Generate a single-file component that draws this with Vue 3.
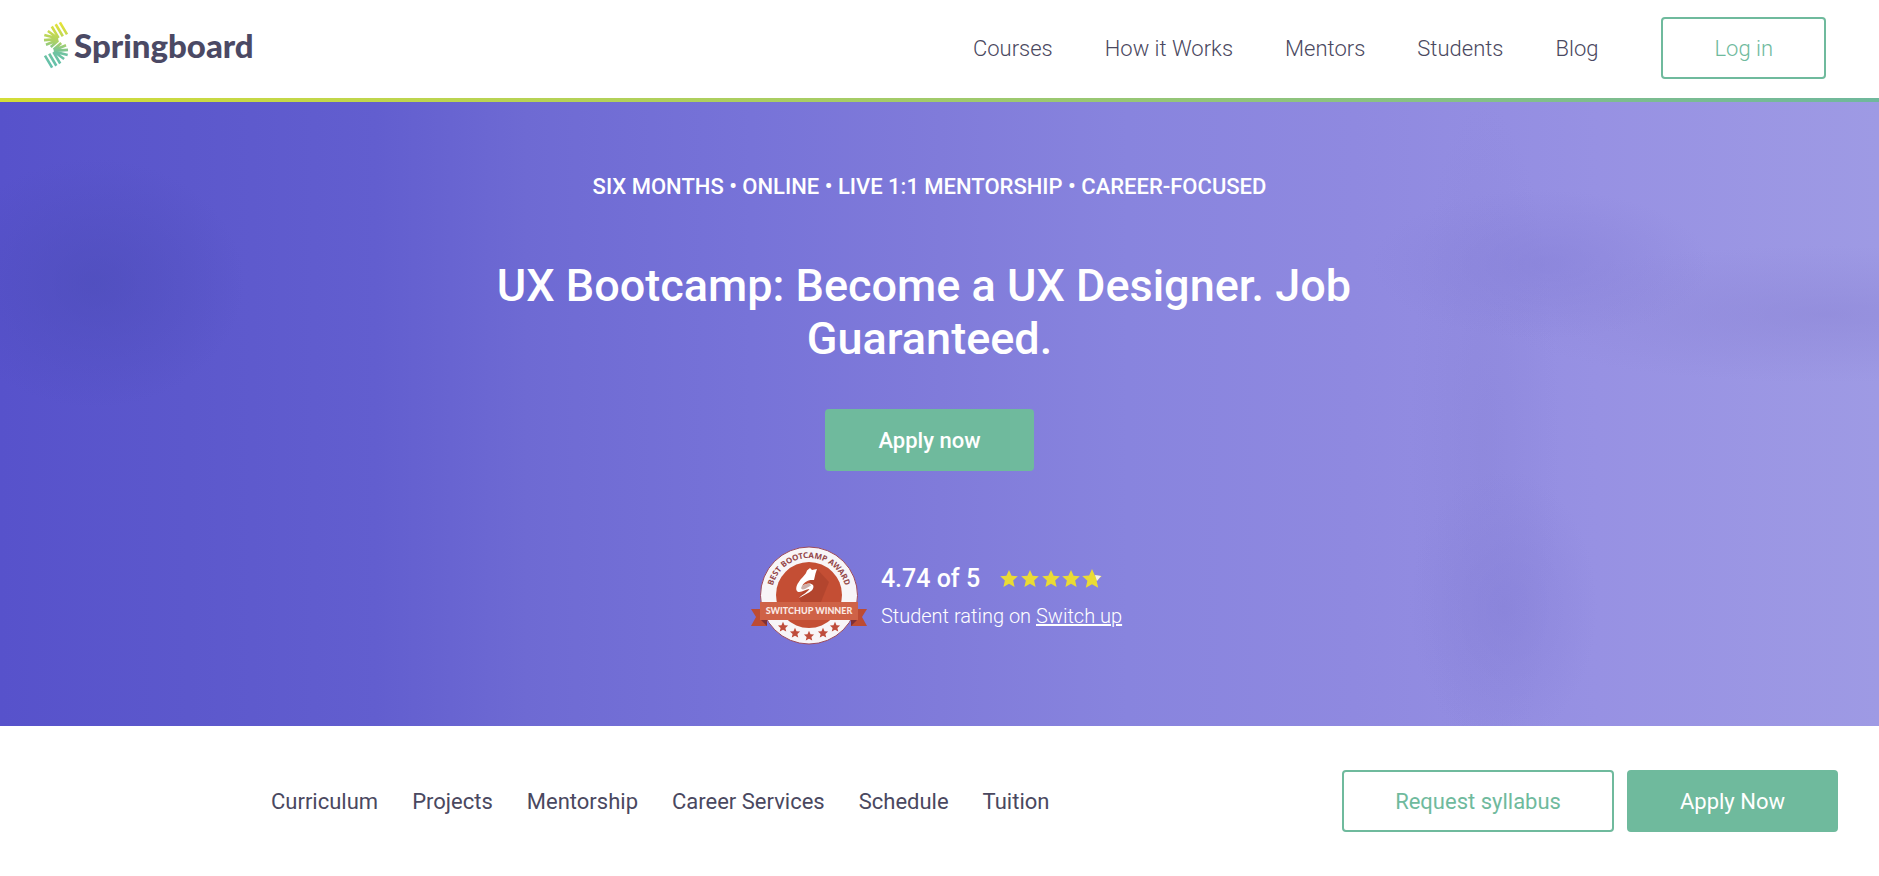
<script setup>
const mainLinks = ['Courses', 'How it Works', 'Mentors', 'Students', 'Blog']
const sectionLinks = ['Curriculum', 'Projects', 'Mentorship', 'Career Services', 'Schedule', 'Tuition']

const star = 'M0-10 2.9-3.6 9.8-3 4.6 1.8 6.2 8.8 0 5.2-6.2 8.8-4.6 1.8-9.8-3-2.9-3.6Z'
const ratingStars = [
  { x: 9, s: 0.9 },
  { x: 30, s: 0.9 },
  { x: 51, s: 0.9 },
  { x: 71, s: 0.9 },
  { x: 92, s: 1 },
]
const badgeStars = [
  [32, 81],
  [44, 87],
  [58, 90],
  [72, 87],
  [84, 81],
]
</script>

<template>
  <div class="page">
    <header class="topbar">
      <a class="brand" href="#" aria-label="Springboard">
        <svg class="mark" viewBox="0 0 78 148" aria-hidden="true">
          <defs>
            <linearGradient id="mark-fill" gradientUnits="userSpaceOnUse" x1="50" y1="0" x2="30" y2="148">
              <stop offset="0" stop-color="#ece52f" />
              <stop offset="0.45" stop-color="#a9d068" />
              <stop offset="0.65" stop-color="#6fc3a0" />
              <stop offset="1" stop-color="#62c0ae" />
            </linearGradient>
          </defs>
          <g fill="none" stroke="url(#mark-fill)" stroke-width="8">
            <path d="M51 4 73 41M38 10 60 47M26 17 47 52" />
            <path d="M45 53 14 31M45 54 3 43M46 56 2 59M46 58 8 73M46 60 23 80" />
            <path d="M27 144 5 107M40 138 18 101M52 131 31 96" />
            <path d="M33 95 64 117M33 94 75 105M32 92 76 89M32 90 70 75M32 88 55 68" />
          </g>
        </svg>
        <span class="wordmark">Springboard</span>
      </a>
      <nav class="main-nav" aria-label="Main">
        <a v-for="label in mainLinks" :key="label" href="#">{{ label }}</a>
      </nav>
      <button class="btn outline light" type="button">Log in</button>
    </header>

    <main class="hero">
      <p class="kicker">SIX MONTHS • ONLINE • LIVE 1:1 MENTORSHIP • CAREER-FOCUSED</p>
      <h1>UX Bootcamp: Become a UX Designer. Job&nbsp; Guaranteed.</h1>
      <button class="btn solid medium" type="button">Apply now</button>
      <section class="award" aria-label="Student rating">
        <svg class="badge" viewBox="0 0 116 99" role="img" aria-label="Best Bootcamp Award, SwitchUp winner">
          <defs>
            <path id="badge-arc" d="M20.500 49.500A37.500 37.500 0 0 1 95.500 49.500" />
            <clipPath id="disc"><circle cx="58" cy="49" r="33" /></clipPath>
          </defs>
          <circle cx="58" cy="49.500" r="48.500" fill="#f8f5f7" stroke="#9c4a5c" stroke-width="1" />
          <circle cx="58" cy="49" r="33" fill="#c44e34" />
          <path d="M66 23 78 36 70 56H50L48 52Z" fill="#a8402c" opacity="0.6" clip-path="url(#disc)" />
          <path
            d="M56 24.500 59 22 61 24 66 23 64.500 27.500 63 34C58 33.500 54 35 51 40 55 37 60 36.500 62 39 63.500 42 61 45 57 47L48 52C52 48 57 46 58.500 43 55 43 51 46.500 47.500 46 44 45 45 40 47.500 36.500 50 32 55 29 56 24.500Z"
            fill="#fff"
          />
          <path d="M51 40C55 37.500 59 37 60 39.500L54 43C51 44 49 43 51 40Z" fill="#cdaea8" />
          <path d="M0 63H16V80H0L5 71ZM116 63H100V80H116L111 71Z" fill="#bd4b33" />
          <path d="M10 74H16V80ZM106 74H100V80Z" fill="#7f3035" />
          <rect x="9" y="56" width="98" height="18" fill="#cf6247" />
          <text class="ribbon" x="58" y="68" text-anchor="middle">SWITCHUP WINNER</text>
          <text class="arc">
            <textPath href="#badge-arc" startOffset="50%" text-anchor="middle">BEST BOOTCAMP AWARD</textPath>
          </text>
          <path
            v-for="[x, y] in badgeStars"
            :key="x"
            :d="star"
            :transform="`translate(${x} ${y}) scale(0.52)`"
            fill="#bf4c3b"
          />
        </svg>
        <div class="rating">
          <div class="score">
            <strong>4.74 of 5</strong>
            <svg class="stars" viewBox="0 0 102 20" role="img" aria-label="4.74 stars">
              <path
                v-for="item in ratingStars"
                :key="item.x"
                :d="star"
                :transform="`translate(${item.x} 10) scale(${item.s})`"
                fill="#eadb35"
              />
              <path d="M95 6 101 7 97 12Z" fill="#f4f1ee" />
            </svg>
          </div>
          <p class="source">Student rating on <a href="#">Switch up</a></p>
        </div>
      </section>
    </main>

    <div class="subbar">
      <nav class="section-nav" aria-label="Program">
        <a v-for="label in sectionLinks" :key="label" href="#">{{ label }}</a>
      </nav>
      <div class="actions">
        <button class="btn outline" type="button">Request syllabus</button>
        <button class="btn solid" type="button">Apply Now</button>
      </div>
    </div>
  </div>
</template>

<style>
body {
  margin: 0;
  background: #fff;
}
</style>

<style scoped>
.page {
  font-family: Roboto, "Liberation Sans", sans-serif;
  color: #4a4860;
}

a {
  color: inherit;
  text-decoration: none;
}

p,
h1 {
  margin: 0;
}

.topbar {
  display: flex;
  align-items: center;
  min-height: 102px;
  padding: 0 53px 2px 43px;
  box-sizing: border-box;
  border-bottom: 4px solid;
  border-image: linear-gradient(90deg, #d3dd38, #6fb89c) 1;
}

.brand {
  display: flex;
  align-items: center;
  gap: 5px;
  margin-right: auto;
  padding-bottom: 6px;
}

.mark {
  width: 26px;
  height: 48px;
}

.wordmark {
  font: 900 33px/40px Lato, sans-serif;
  color: #4b4964;
}

.main-nav {
  display: flex;
  gap: 52px;
  margin-right: 63px;
  font-size: 22px;
  font-weight: 300;
}

.btn {
  height: 62px;
  padding: 2px 51px 0;
  border: 2px solid #6fba9d;
  border-radius: 4px;
  font: 400 22px/28px Roboto, "Liberation Sans", sans-serif;
  cursor: pointer;
  white-space: nowrap;
}

.outline {
  background: #fff;
  color: #6fba9d;
}

.solid {
  background: #6fba9d;
  color: #fff;
}

.light {
  font-weight: 300;
}

.medium {
  font-weight: 500;
}

.hero {
  display: flex;
  flex-direction: column;
  align-items: center;
  padding: 71px 20px 81px 0;
  color: #fff;
  text-align: center;
  background:
    radial-gradient(ellipse 8% 20% at 5% 29%, rgba(76, 76, 184, 0.6), rgba(76, 76, 184, 0) 100%),
    radial-gradient(ellipse 9% 12% at 82% 26%, rgba(132, 126, 214, 0.5), rgba(132, 126, 214, 0) 100%),
    radial-gradient(ellipse 18% 11% at 97% 34%, rgba(137, 130, 212, 0.45), rgba(137, 130, 212, 0) 100%),
    radial-gradient(ellipse 5% 22% at 80% 81%, rgba(132, 126, 214, 0.5), rgba(132, 126, 214, 0) 100%),
    radial-gradient(ellipse 4% 55% at 79% 55%, rgba(135, 129, 214, 0.35), rgba(135, 129, 214, 0) 100%),
    linear-gradient(90deg, #5752cb 0%, #5c58cc 10%, #625ecf 20%, #6e6ad3 28%, #7773d8 40%, #807bda 50%, #8884de 60%, #8f89e0 72%, #9791e3 85%, #9e9ae4 100%);
}

.kicker {
  font-size: 22px;
  font-weight: 500;
  line-height: 28px;
}

h1 {
  max-width: 920px;
  margin: 58px 0 44px;
  font-size: 45px;
  font-weight: 500;
  line-height: 53px;
}

.award {
  display: flex;
  align-items: center;
  gap: 14px;
  margin: 75px 0 0 14px;
  text-align: left;
}

.badge {
  width: 116px;
  height: 99px;
  overflow: visible;
}

.ribbon,
.arc {
  font-family: "Noto Sans", sans-serif;
  font-weight: 700;
  font-size: 8px;
}

.ribbon {
  font-family: Lato, sans-serif;
  font-size: 9px;
  font-weight: 900;
  fill: #fbe9e4;
}

.arc {
  fill: #934547;
}

.score {
  display: flex;
  align-items: center;
  gap: 20px;
  font-size: 25px;
  line-height: 30px;
}

.score strong {
  font-weight: 500;
}

.stars {
  width: 102px;
  height: 20px;
}

.source {
  margin-top: 10px;
  font-size: 20px;
  font-weight: 300;
  line-height: 24px;
}

.source a {
  text-decoration: underline;
}

.subbar {
  display: flex;
  align-items: center;
  justify-content: space-between;
  padding: 44px 41px 43px 271px;
}

.section-nav {
  display: flex;
  gap: 34px;
  font-size: 22px;
}

.actions {
  display: flex;
  gap: 13px;
}
</style>
